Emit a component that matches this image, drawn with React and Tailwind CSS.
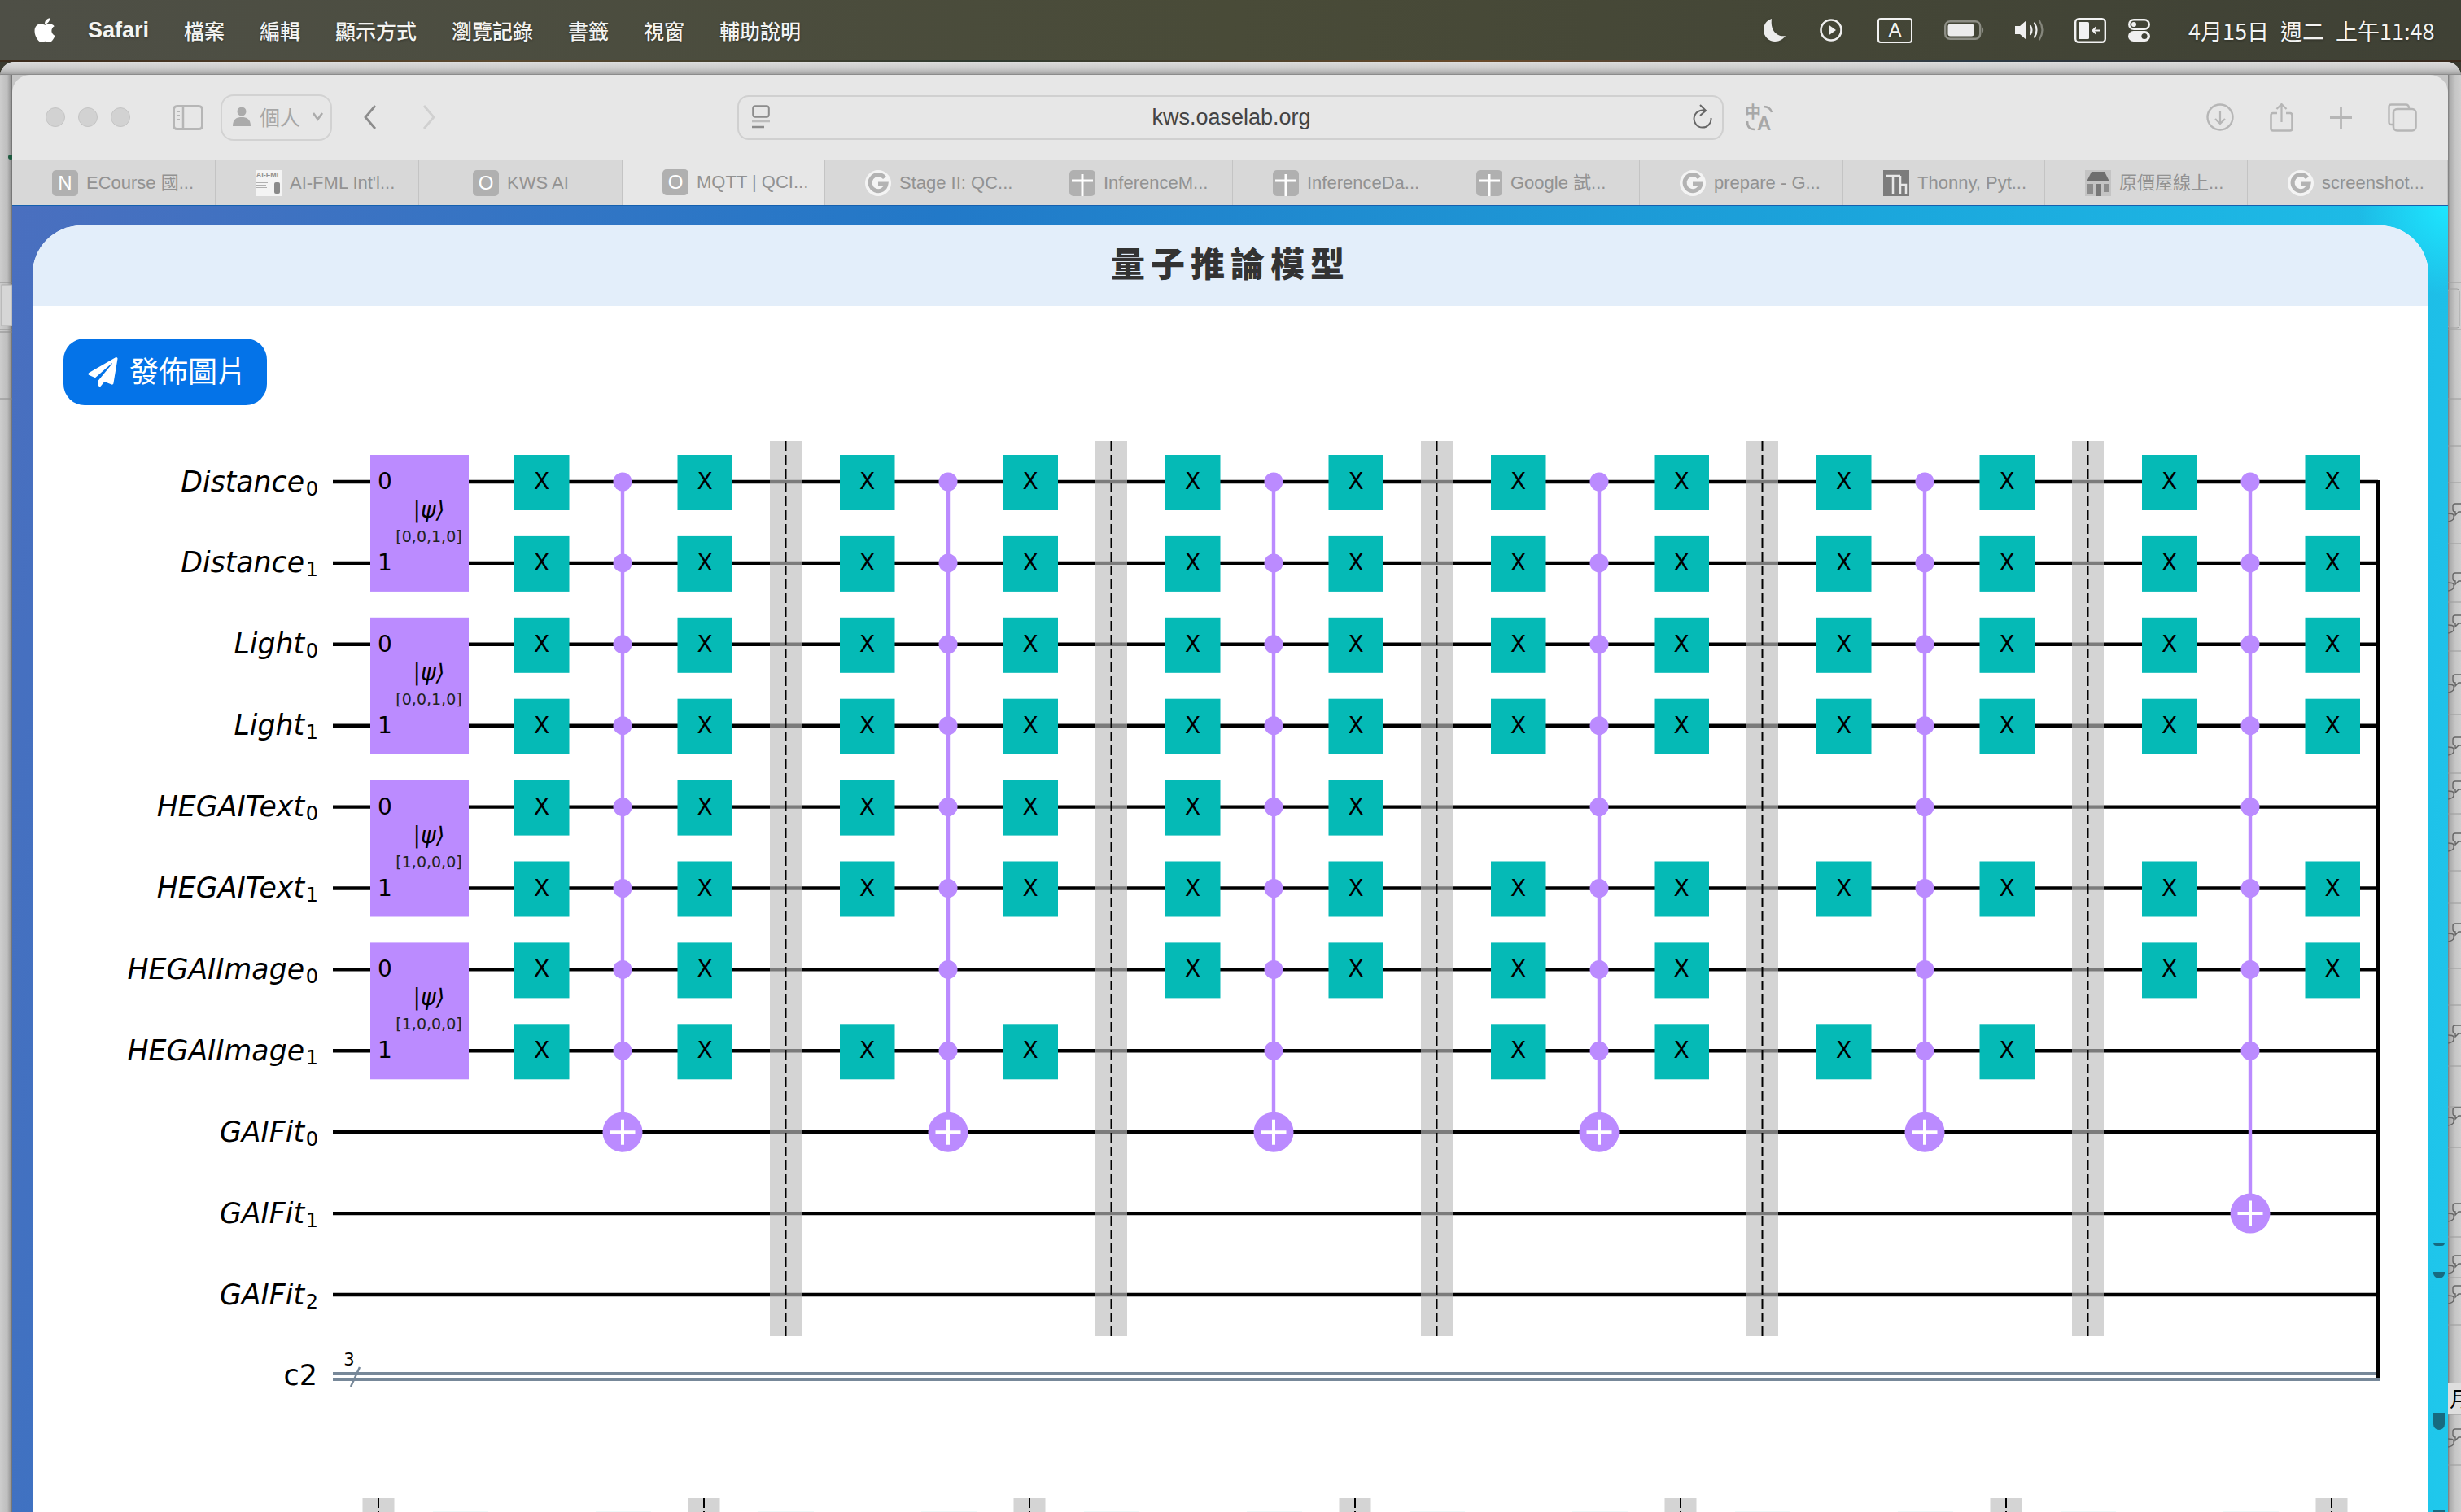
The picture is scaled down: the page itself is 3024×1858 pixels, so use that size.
import React from "react";
import { FaApple, FaPaperPlane } from "react-icons/fa";

const CJK = '"Liberation Sans","Noto Sans CJK TC",sans-serif';
const NOTO = '"Noto Sans CJK TC","Noto Sans",sans-serif';
const DJ = '"DejaVu Sans",sans-serif';

const MENU = ["檔案", "編輯", "顯示方式", "瀏覽記錄", "書籤", "視窗", "輔助說明"];

function Moon() {
  return (
    <svg width="27" height="28" viewBox="0 0 27 28" className="drop-shadow-sm">
      <path d="M10 0 C3 2 0 8 0 14 C0 22 7 28 14 28 C20 28 24 25 27 21 C17 23 8 15 10 0 Z" fill="#ececec" />
    </svg>
  );
}
function PlayCircle() {
  return (
    <svg width="28" height="28" viewBox="0 0 28 28">
      <circle cx="14" cy="14" r="12.5" fill="none" stroke="#efefef" strokeWidth="2.6" />
      <path d="M11 7.5 L20 14 L11 20.5 Z" fill="#efefef" />
    </svg>
  );
}
function Battery() {
  return (
    <svg width="49" height="24" viewBox="0 0 49 24">
      <rect x="1.2" y="1.2" width="43" height="21.6" rx="6" fill="none" stroke="#8d8e85" strokeWidth="2.4" />
      <rect x="4.5" y="4.5" width="32" height="15" rx="3" fill="#ececec" />
      <path d="M46.5 8 q2.5 4 0 8" fill="#8d8e85" stroke="#8d8e85" />
    </svg>
  );
}
function Volume() {
  return (
    <svg width="39" height="26" viewBox="0 0 39 26">
      <path d="M1 8 H7 L15 1 V25 L7 18 H1 Z" fill="#efefef" />
      <path d="M20 8 q3 5 0 10" fill="none" stroke="#efefef" strokeWidth="2.2" strokeLinecap="round" />
      <path d="M25 4.5 q5 8.5 0 17" fill="none" stroke="#efefef" strokeWidth="2.2" strokeLinecap="round" />
      <path d="M31 1.5 q7 11.5 0 23" fill="none" stroke="#85867c" strokeWidth="2.2" strokeLinecap="round" />
    </svg>
  );
}
function Stage() {
  return (
    <svg width="39" height="31" viewBox="0 0 39 31">
      <rect x="1.2" y="1.2" width="36.6" height="28.6" rx="4" fill="none" stroke="#f2f2f2" strokeWidth="2.4" />
      <rect x="5" y="5" width="13" height="21" rx="1.5" fill="#f2f2f2" />
      <path d="M31 15.5 H23 M26.5 11.5 L22.5 15.5 L26.5 19.5" fill="none" stroke="#f2f2f2" strokeWidth="2" />
    </svg>
  );
}
function Control() {
  return (
    <svg width="27" height="28" viewBox="0 0 27 28">
      <rect x="1.2" y="1.2" width="24.6" height="11.6" rx="5.8" fill="none" stroke="#f0f0f0" strokeWidth="2.4" />
      <circle cx="7" cy="7" r="3" fill="#f0f0f0" />
      <rect x="0" y="15" width="27" height="13" rx="6.5" fill="#f0f0f0" />
      <circle cx="20" cy="21.5" r="3.6" fill="#3f4136" />
    </svg>
  );
}

function MenuBar() {
  return (
    <div
      className="flex h-[74px] shrink-0 items-center bg-[linear-gradient(90deg,#4e4f46_0%,#494b38_50%,#3f4135_100%)] text-[#f4f4f2] [text-shadow:0_1px_3px_rgba(0,0,0,0.35)]"
      style={{ fontFamily: NOTO }}
    >
      <FaApple className="ml-[38px] text-[34px] text-white" />
      <span className="ml-[36px] w-[76px] whitespace-nowrap text-[27px] font-bold leading-none" style={{ fontFamily: '"Liberation Sans",sans-serif' }}>
        Safari
      </span>
      <div className="ml-[42px] flex gap-[43px] text-[25px] font-medium leading-none">
        {MENU.map((m) => (
          <span key={m}>{m}</span>
        ))}
      </div>
      <div className="ml-auto flex items-center">
        <Moon />
        <div className="ml-[42px]"><PlayCircle /></div>
        <div className="ml-[43px] flex h-[31px] w-[43px] items-center justify-center rounded-[4px] border-[2.4px] border-[#f2f2f2] text-[24px] leading-none" style={{ fontFamily: '"Liberation Sans",sans-serif' }}>
          A
        </div>
        <div className="ml-[39px]"><Battery /></div>
        <div className="ml-[37px]"><Volume /></div>
        <div className="ml-[35px]"><Stage /></div>
        <div className="ml-[27px]"><Control /></div>
        <span className="ml-[47px] mr-[32px] w-[303px] whitespace-nowrap text-[27px] leading-none [word-spacing:8px]">4月15日 週二 上午11:48</span>
      </div>
    </div>
  );
}

const ICON_STROKE = "#b6b6b6";

function Toolbar() {
  return (
    <div className="flex h-[104px] shrink-0 items-center bg-[#e7e7e7] pl-[41px]">
      <div className="flex gap-[16px]">
        {[0, 1, 2].map((i) => (
          <div key={i} className="h-[24px] w-[24px] rounded-full border border-[#c4c4c4] bg-[#d2d2d2]" />
        ))}
      </div>
      <svg className="ml-[52px]" width="38" height="31" viewBox="0 0 38 31">
        <rect x="1.5" y="1.5" width="35" height="28" rx="4" fill="none" stroke={ICON_STROKE} strokeWidth="3" />
        <path d="M13 2 V29" stroke={ICON_STROKE} strokeWidth="2.5" />
        <path d="M5 8 H9 M5 13 H9 M5 18 H9" stroke={ICON_STROKE} strokeWidth="2" />
      </svg>
      <div className="ml-[21px] flex h-[57px] w-[137px] items-center rounded-[16px] border-[2px] border-[#d2d2d2] pl-[13px] pb-[2px] text-[25px] leading-none text-[#a6a6a6]" style={{ fontFamily: NOTO }}>
        <svg width="22" height="24" viewBox="0 0 22 24">
          <circle cx="11" cy="6" r="5.5" fill="#ababab" />
          <path d="M0 24 C0 15 5 13 11 13 C17 13 22 15 22 24 Z" fill="#ababab" />
        </svg>
        <span className="ml-[11px]">個人</span>
        <svg className="ml-[14px]" width="15" height="12" viewBox="0 0 15 12">
          <path d="M2 2 L7.5 9.5 L13 2" fill="none" stroke="#ababab" strokeWidth="2.6" />
        </svg>
      </div>
      <svg className="ml-[39px]" width="16" height="30" viewBox="0 0 16 30">
        <path d="M14 1 L2 15 L14 29" fill="none" stroke="#8c8c8c" strokeWidth="2.8" />
      </svg>
      <svg className="ml-[55px]" width="17" height="30" viewBox="0 0 17 30">
        <path d="M3 1 L15 15 L3 29" fill="none" stroke="#d0d0d0" strokeWidth="2.8" />
      </svg>
      <div className="ml-[371px] flex h-[55px] w-[1212px] items-center rounded-[14px] border-[2px] border-[#d0d0d0] pl-[16px] pr-[12px]">
        <svg width="22" height="30" viewBox="0 0 22 30">
          <rect x="1.2" y="1.2" width="19.6" height="13.6" rx="3" fill="none" stroke="#8c8c8c" strokeWidth="2" />
          <path d="M0 20 H22" stroke="#bcbcbc" strokeWidth="2.4" />
          <path d="M0 27 H15" stroke="#8c8c8c" strokeWidth="2.4" />
        </svg>
        <span className="flex-1 text-center text-[27px] leading-none text-[#444]" style={{ fontFamily: CJK }}>kws.oaselab.org</span>
        <svg width="24" height="32" viewBox="0 0 24 32">
          <path d="M15 8 A10.5 10.5 0 1 0 22.5 17" fill="none" stroke="#666" strokeWidth="2" />
          <path d="M9 1 L16 8 L9 14" fill="none" stroke="#666" strokeWidth="2" />
        </svg>
      </div>
      <svg className="ml-[27px]" width="36" height="47" viewBox="0 -7 36 47">
        <text x="-1" y="17" fontSize="20" fontWeight="700" fill="#a8a8a8" fontFamily={NOTO}>中</text>
        <text x="14" y="32" fontSize="24" fontWeight="700" fill="#a8a8a8" fontFamily={'"Liberation Sans",sans-serif'}>A</text>
        <path d="M22 3 q8 0 10 7 M2 21 q0 10 9 10" fill="none" stroke="#a8a8a8" strokeWidth="2.6" />
      </svg>
      <svg className="ml-[530px]" width="34" height="34" viewBox="0 0 34 34">
        <circle cx="17" cy="17" r="15.5" fill="none" stroke={ICON_STROKE} strokeWidth="2.4" />
        <path d="M17 9 V25 M11 19 L17 25 L23 19" fill="none" stroke={ICON_STROKE} strokeWidth="2.2" />
      </svg>
      <svg className="ml-[44px]" width="29" height="36" viewBox="0 0 29 36">
        <path d="M9 13 H4 Q1.5 13 1.5 16 V32 Q1.5 34.5 4 34.5 H25 Q27.5 34.5 27.5 32 V16 Q27.5 13 25 13 H20" fill="none" stroke={ICON_STROKE} strokeWidth="2.6" />
        <path d="M14.5 24 V2 M8.5 8 L14.5 2 L20.5 8" fill="none" stroke={ICON_STROKE} strokeWidth="2.2" />
      </svg>
      <svg className="ml-[45px]" width="27" height="27" viewBox="0 0 27 27">
        <path d="M13.5 0 V27 M0 13.5 H27" stroke={ICON_STROKE} strokeWidth="2.8" />
      </svg>
      <svg className="ml-[44px]" width="36" height="35" viewBox="0 0 36 35">
        <path d="M6 26 H4.5 Q1.5 26 1.5 23 V4.5 Q1.5 1.5 4.5 1.5 H22 Q26 1.5 26 6" fill="none" stroke={ICON_STROKE} strokeWidth="2.4" />
        <rect x="7" y="7" width="27.5" height="26.5" rx="4.5" fill="none" stroke={ICON_STROKE} strokeWidth="2.6" />
      </svg>
    </div>
  );
}

function Tile({ children }) {
  return (
    <div className="flex h-[32px] w-[32px] shrink-0 items-center justify-center rounded-[5px] bg-[#b0b0b0] text-[24px] leading-none text-white" style={{ fontFamily: '"Liberation Sans",sans-serif' }}>
      {children}
    </div>
  );
}
function PlusTile() {
  return (
    <svg width="32" height="32" viewBox="0 0 32 32" className="shrink-0">
      <rect width="32" height="32" rx="5" fill="#b0b0b0" />
      <path d="M16 5 V32 M3 13 H29" stroke="#fff" strokeWidth="3" />
    </svg>
  );
}
function GIcon() {
  return (
    <svg width="32" height="32" viewBox="0 0 32 32" className="shrink-0">
      <circle cx="16" cy="16" r="16" fill="#f4f4f4" />
      <path d="M24 9.5 A10 10 0 1 0 26 17 H16" fill="none" stroke="#b3b3b3" strokeWidth="5" />
    </svg>
  );
}
function AiFml() {
  return (
    <div className="flex h-[32px] w-[32px] shrink-0 flex-col items-center bg-[#f4f4f4] pt-[2px] text-[#909090]" style={{ fontFamily: '"Liberation Sans",sans-serif' }}>
      <span className="text-[9px] font-bold leading-none">AI-FML</span>
      <div className="mt-[4px] flex w-full items-start justify-between px-[1px]">
        <div className="flex flex-col gap-[2px]">
          <div className="h-[1px] w-[14px] bg-[#b0b0b0]" />
          <div className="h-[1px] w-[12px] bg-[#b0b0b0]" />
          <div className="h-[1px] w-[13px] bg-[#b0b0b0]" />
        </div>
        <div className="mr-[1px] h-[14px] w-[7px] rounded-[2px] bg-[#8a8a8a]" />
      </div>
    </div>
  );
}
function Thonny() {
  return (
    <svg width="32" height="32" viewBox="0 0 32 32" className="shrink-0">
      <rect width="32" height="32" fill="#7c7c7c" />
      <path d="M3 7 H21 M12 7 V29 M21 7 V29 M21 18 H28 V29" fill="none" stroke="#e8e8e8" strokeWidth="2.5" />
    </svg>
  );
}
function House() {
  return (
    <svg width="32" height="32" viewBox="0 0 32 32" className="shrink-0">
      <rect width="32" height="32" fill="#c4c4c4" />
      <path d="M8 2 H24 L30 14 H2 Z" fill="#6e6e6e" />
      <rect x="3" y="17" width="7" height="12" fill="#8c8c8c" />
      <rect x="13" y="17" width="7" height="15" fill="#787878" />
      <rect x="23" y="17" width="6" height="10" fill="#8c8c8c" />
    </svg>
  );
}

const TABS = [
  { icon: <Tile>N</Tile>, text: "ECourse 國..." },
  { icon: <AiFml />, text: "AI-FML Int'l..." },
  { icon: <Tile>O</Tile>, text: "KWS AI", center: true },
  { icon: <Tile>O</Tile>, text: "MQTT | QCI...", active: true },
  { icon: <GIcon />, text: "Stage II: QC..." },
  { icon: <PlusTile />, text: "InferenceM..." },
  { icon: <PlusTile />, text: "InferenceDa..." },
  { icon: <PlusTile />, text: "Google 試..." },
  { icon: <GIcon />, text: "prepare - G..." },
  { icon: <Thonny />, text: "Thonny, Pyt..." },
  { icon: <House />, text: "原價屋線上..." },
  { icon: <GIcon />, text: "screenshot..." },
];

function Tabs() {
  return (
    <div className="grid h-[56px] shrink-0 grid-cols-[250px_250px_250px_249px_251px_250px_250px_250px_250px_248px_249px_246px] bg-[#d8d8d8]" style={{ fontFamily: CJK }}>
      {TABS.map((t) => (
        <div
          key={t.text}
          className={
            "flex items-center gap-[10px] overflow-hidden whitespace-nowrap border-r border-[#c4c4c4] text-[22px] leading-none text-[#929292] " +
            (t.center ? "pl-[66px] " : "pl-[49px] ") +
            (t.active ? "bg-[#e7e7e7]" : "border-t border-t-[#c2c2c2]")
          }
        >
          {t.icon}
          <span>{t.text}</span>
        </div>
      ))}
    </div>
  );
}

const ROWY = Array.from({ length: 12 }, (_, i) => 592 + 99.9 * i);
const LABELS = [
  ["Distance", "0"],
  ["Distance", "1"],
  ["Light", "0"],
  ["Light", "1"],
  ["HEGAIText", "0"],
  ["HEGAIText", "1"],
  ["HEGAIImage", "0"],
  ["HEGAIImage", "1"],
  ["GAIFit", "0"],
  ["GAIFit", "1"],
  ["GAIFit", "2"],
];
const SETS = [
  { rows: [0, 1, 2, 3, 4, 5, 6, 7], target: 8 },
  { rows: [0, 1, 2, 3, 4, 5, 7], target: 8 },
  { rows: [0, 1, 2, 3, 4, 5, 6], target: 8 },
  { rows: [0, 1, 2, 3, 5, 6, 7], target: 8 },
  { rows: [0, 1, 2, 3, 5, 7], target: 8 },
  { rows: [0, 1, 2, 3, 5, 6], target: 9 },
];
const PREP = ["[0,0,1,0]", "[0,0,1,0]", "[1,0,0,0]", "[1,0,0,0]"];
const PURPLE = "#bb8bff";
const TEAL = "#05bab6";

function XGate({ cx, y }) {
  return (
    <g>
      <rect x={cx - 33.5} y={y - 33} width="67.5" height="68" fill={TEAL} />
      <text x={cx} y={y + 9} textAnchor="middle" fontSize="28" fill="#000" fontFamily={DJ}>X</text>
    </g>
  );
}

function Circuit() {
  return (
    <svg className="mt-[2px] block" width="2944" height="1358" viewBox="40 500 2944 1358">
      {LABELS.map(([l, s], i) => (
        <g key={i}>
          <text x="374" y={ROWY[i] + 11.5} textAnchor="end" fontSize="34.7" fontStyle="italic" fill="#000" fontFamily={DJ}>{l}</text>
          <text x="391" y={ROWY[i] + 16.5} textAnchor="end" fontSize="24" fill="#000" fontFamily={DJ}>{s}</text>
          <path d={`M409 ${ROWY[i]} H2922`} stroke="#000" strokeWidth="4.4" />
        </g>
      ))}
      <text x="390" y="1702" textAnchor="end" fontSize="35" fill="#000" fontFamily={DJ}>c2</text>
      <text x="429" y="1678" textAnchor="middle" fontSize="21" fill="#000" fontFamily={DJ}>3</text>
      <path d="M409 1688 H2924 M409 1695 H2924" stroke="#778899" strokeWidth="4" />
      <path d="M431 1704 L442 1680" stroke="#778899" strokeWidth="2.5" />
      <path d="M2922 590 V1693" stroke="#000" strokeWidth="4.4" />

      {PREP.map((p, i) => {
        const y0 = ROWY[i * 2];
        const y1 = ROWY[i * 2 + 1];
        return (
          <g key={i}>
            <rect x="455" y={y0 - 33} width="121" height={y1 - y0 + 68} fill={PURPLE} />
            <text x="473" y={y0 + 9} textAnchor="middle" fontSize="28" fill="#000" fontFamily={DJ}>0</text>
            <text x="473" y={y1 + 9} textAnchor="middle" fontSize="28" fill="#000" fontFamily={DJ}>1</text>
            <text x="527" y={y0 + 44} textAnchor="middle" fontSize="28" fontStyle="italic" fill="#000" fontFamily={DJ}>|ψ⟩</text>
            <text x="527" y={y0 + 74} textAnchor="middle" fontSize="19" fill="#222" fontFamily={DJ}>{p}</text>
          </g>
        );
      })}

      {SETS.map((s, k) => {
        const o = 400 * k;
        const cx = 765 + o;
        return (
          <g key={k}>
            {s.rows.map((r) => (
              <React.Fragment key={r}>
                <XGate cx={665.5 + o} y={ROWY[r]} />
                <XGate cx={866 + o} y={ROWY[r]} />
              </React.Fragment>
            ))}
            <path d={`M${cx} ${ROWY[0]} V${ROWY[s.target]}`} stroke={PURPLE} strokeWidth="4.4" />
            {Array.from({ length: 8 }, (_, r) => (
              <circle key={r} cx={cx} cy={ROWY[r]} r="11.5" fill={PURPLE} />
            ))}
            <circle cx={cx} cy={ROWY[s.target]} r="24.5" fill={PURPLE} />
            <path d={`M${cx - 15.5} ${ROWY[s.target]} H${cx + 15.5} M${cx} ${ROWY[s.target] - 15.5} V${ROWY[s.target] + 15.5}`} stroke="#fff" strokeWidth="4" />
          </g>
        );
      })}

      {[0, 1, 2, 3, 4].map((k) => (
        <g key={k}>
          <rect x={946 + 400 * k} y="542" width="39" height="1100" fill="#bdbdbd" fillOpacity="0.65" />
          <path d={`M${965.5 + 400 * k} 542 V1642`} stroke="#000" strokeWidth="2" strokeDasharray="12 5" />
        </g>
      ))}

      {[0, 1, 2, 3, 4, 5, 6].map((k) => (
        <g key={k}>
          <rect x={445.5 + 400 * k} y="1841" width="39" height="17" fill="#bdbdbd" fillOpacity="0.65" />
          <path d={`M${465 + 400 * k} 1841 V1858`} stroke="#000" strokeWidth="2" strokeDasharray="12 4" />
        </g>
      ))}
      {Array.from({ length: 12 }, (_, k) => (
        <rect key={k} x={532 + 200 * k} y="1857" width="68" height="1" fill="#eefafa" />
      ))}
    </svg>
  );
}

function Page() {
  return (
    <div className="relative flex min-h-0 flex-1 flex-col border-t border-t-[#1560ae] bg-[radial-gradient(circle_at_100%_0%,#1de6ff_0,#1de6ff00_110px),linear-gradient(100deg,#4a6fbf_0%,#2279c8_35%,#1ba6dc_70%,#1fc8ec_100%)] pl-[25px] pr-[24px] pt-[24px]">
      <div className="flex min-h-0 flex-1 flex-col overflow-hidden rounded-t-[60px] bg-white">
        <div className="flex h-[99px] shrink-0 items-center justify-center bg-[#e3eefa] pb-[10px] text-[42px] font-black leading-none tracking-[7px] text-[#333]" style={{ fontFamily: NOTO }}>
          量子推論模型
        </div>
        <div className="pl-[38px] pt-[40px]">
          <button className="flex h-[82px] w-[250px] items-center gap-[14px] rounded-[26px] bg-[#0473e8] pb-[7px] pl-[30px] text-[36px] leading-none text-white" style={{ fontFamily: NOTO }}>
            <FaPaperPlane className="mt-[7px] h-[36px] w-[37px] shrink-0" />
            <span>發佈圖片</span>
          </button>
        </div>
        <Circuit />
      </div>
      <div className="absolute left-[2975px] top-[1274px] h-[4px] w-[14px] rounded-b-full bg-[#176a80]" />
      <div className="absolute left-[2975px] top-[1310px] h-[8px] w-[14px] rounded-b-full bg-[#176a80]" />
      <div className="absolute left-[2975px] top-[1483px] h-[21px] w-[14px] rounded-b-[7px] bg-[#176a80]" />
      <div className="absolute left-[2975px] top-[1602px] h-[4px] w-[14px] bg-[#176a80]" />
    </div>
  );
}

function LeftBezel() {
  return (
    <div className="w-[15px] shrink-0 bg-[linear-gradient(90deg,#cdcdcd_0%,#bdbdbd_60%,#8f8f8f_92%,#666_100%)]">
      <svg width="15" height="1766" viewBox="0 92 15 1766" className="block">
        <rect x="2" y="350" width="13" height="50" fill="#d6d6d6" stroke="#aaa" />
        <path d="M0 347 H15 M0 405 H15 M0 408 H15 M0 490 H15" stroke="#8a8a8a" strokeWidth="1" />
        <circle cx="13" cy="193" r="3" fill="#1d5a3f" />
      </svg>
    </div>
  );
}

function RightBezel() {
  const ys = [628, 713, 765, 838, 915, 969, 1033, 1144, 1269, 1370, 1488, 1552, 1589, 1765];
  const lines = [347, 405, 490, 548, 593, 668, 740, 800, 878, 950, 1000, 1070, 1110, 1190, 1235, 1310, 1360, 1410, 1520, 1570, 1628, 1700, 1738, 1800];
  return (
    <div className="w-[16px] shrink-0 bg-[linear-gradient(90deg,#777_0%,#a8a8a8_12%,#c6c6c6_55%,#cfcfcf_100%)]">
      <svg width="16" height="1766" viewBox="0 92 16 1766" className="block">
        {lines.map((y) => (
          <path key={y} d={`M0 ${y} H16`} stroke="#9a9a9a" strokeWidth="1" />
        ))}
        <rect x="0" y="355" width="14" height="48" rx="3" fill="none" stroke="#a0a0a0" />
        {ys.map((y) => (
          <g key={y} fill="none" stroke="#666" strokeWidth="1.4">
            <path d={`M16 ${y - 9} H9 Q6 ${y - 9} 6 ${y - 6} V${y - 2} Q6 ${y + 1} 9 ${y + 1} V${y + 5} L13 ${y + 1} H16`} />
            <path d={`M0 ${y + 3} Q6 ${y + 3} 7 ${y + 5} V${y + 9} Q6 ${y + 12} 0 ${y + 13}`} />
          </g>
        ))}
        <rect x="0" y="1700" width="16" height="38" fill="#dedede" />
        <text x="2" y="1729" fontSize="26" fill="#000" fontFamily={NOTO}>月</text>
      </svg>
    </div>
  );
}

export default function App() {
  return (
    <div className="flex h-[1858px] w-[3024px] flex-col overflow-hidden bg-[#3a3a30]">
      <MenuBar />
      <div className="h-[2px] shrink-0 bg-[linear-gradient(90deg,#3a2a1c,#5c4a30,#2e3a30,#6a4a2a,#2c3a46,#3a2a1c)]" />
      <div className="flex min-h-0 flex-1 flex-col overflow-hidden rounded-t-[18px] bg-[#c6c6c6]">
        <div className="h-[16px] shrink-0 bg-[linear-gradient(180deg,#dedede_0%,#c8c8c8_55%,#a9a9a9_90%,#7e7e7e_100%)]" />
        <div className="flex min-h-0 flex-1">
          <LeftBezel />
          <div className="flex w-[2993px] min-w-0 flex-col overflow-hidden rounded-t-[22px]">
            <Toolbar />
            <Tabs />
            <Page />
          </div>
          <RightBezel />
        </div>
      </div>
    </div>
  );
}
